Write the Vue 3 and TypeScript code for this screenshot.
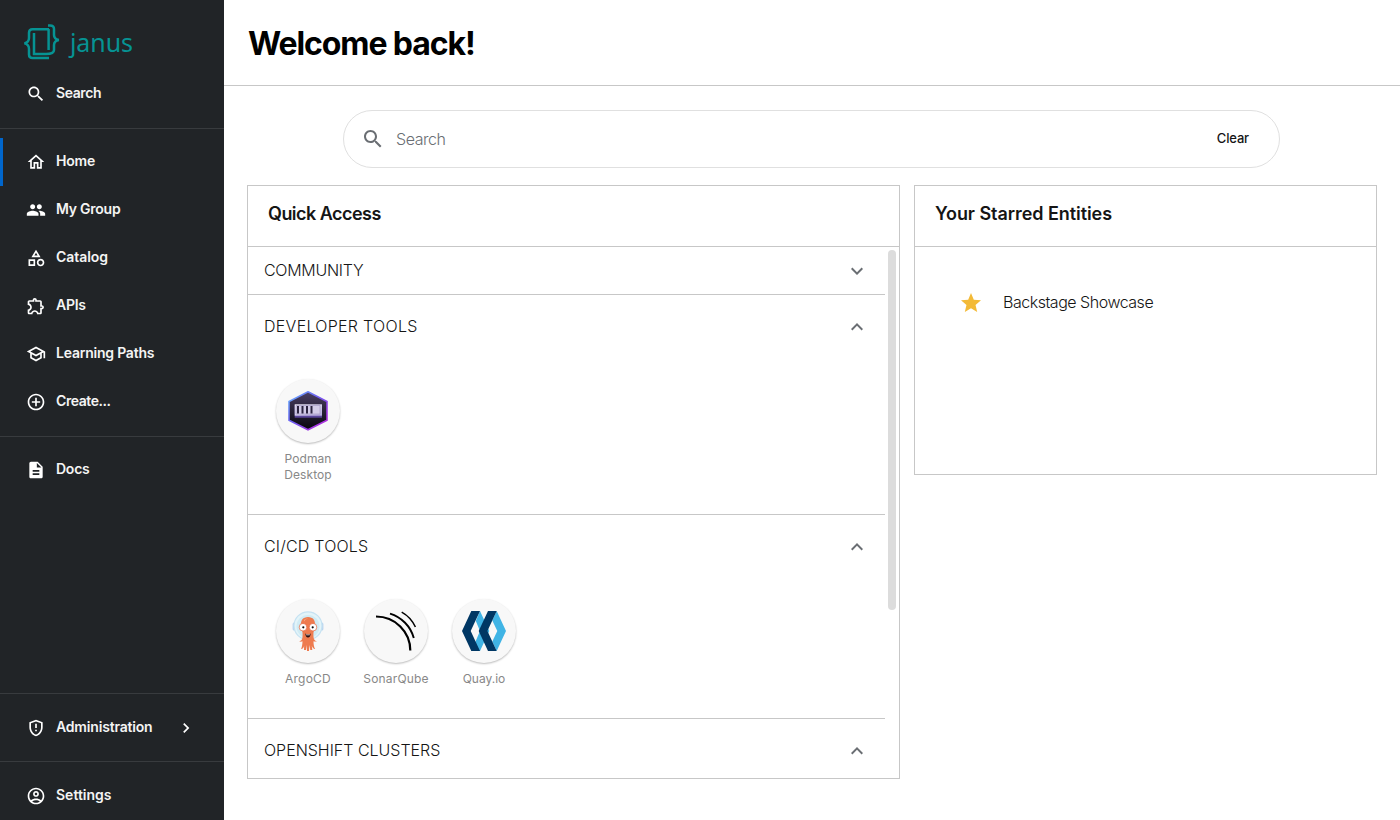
<script setup lang="ts">
interface NavItem {
  label: string
  icon: string
  spacing: number
  active?: boolean
}

interface Tool {
  name: string
  spacing: number
}

interface Section {
  title: string
  spacing: number
  open: boolean
  tools: Tool[]
}

const paths: Record<string, string> = {
  search: 'M15.5 14h-.79l-.28-.27C15.41 12.59 16 11.11 16 9.5 16 5.91 13.09 3 9.5 3S3 5.91 3 9.5 5.91 16 9.5 16c1.61 0 3.09-.59 4.23-1.57l.27.28v.79l5 4.99L20.49 19l-4.99-5zm-6 0C7.01 14 5 11.99 5 9.5S7.01 5 9.5 5 14 7.01 14 9.5 11.99 14 9.5 14z',
  home: 'm12 5.69 5 4.5V18h-2v-6H9v6H7v-7.81l5-4.5M12 3 2 12h3v8h6v-6h2v6h6v-8h3L12 3z',
  group: 'M16 11c1.66 0 2.99-1.34 2.99-3S17.66 5 16 5c-1.66 0-3 1.34-3 3s1.34 3 3 3zm-8 0c1.66 0 2.99-1.34 2.99-3S9.66 5 8 5C6.34 5 5 6.34 5 8s1.34 3 3 3zm0 2c-2.33 0-7 1.17-7 3.5V19h14v-2.5c0-2.33-4.67-3.5-7-3.5zm8 0c-.29 0-.62.02-.97.05 1.16.84 1.97 1.97 1.97 3.45V19h6v-2.5c0-2.33-4.67-3.5-7-3.5z',
  catalog: 'M12 2l-5.5 9h11L12 2zm0 3.84L13.93 9h-3.87L12 5.84zM17.5 13c-2.49 0-4.5 2.01-4.5 4.5s2.01 4.5 4.5 4.5 4.5-2.01 4.5-4.5-2.01-4.5-4.5-4.5zm0 7c-1.38 0-2.5-1.12-2.5-2.5s1.12-2.5 2.5-2.5 2.5 1.12 2.5 2.5-1.12 2.5-2.5 2.5zM3 21.5h8v-8H3v8zm2-6h4v4H5v-4z',
  api: 'M10.5 4.5c.28 0 .5.22.5.5v2h6v6h2c.28 0 .5.22.5.5s-.22.5-.5.5h-2v6h-2.12c-.68-1.75-2.39-3-4.38-3s-3.7 1.25-4.38 3H4v-2.12c1.75-.68 3-2.39 3-4.38 0-1.99-1.24-3.7-2.99-4.38L4 7h6V5c0-.28.22-.5.5-.5m0-2C9.12 2.5 8 3.62 8 5H4c-1.1 0-1.99.9-1.99 2v3.8h.29c1.49 0 2.7 1.21 2.7 2.7s-1.21 2.7-2.7 2.7H2V20c0 1.1.9 2 2 2h3.8v-.3c0-1.49 1.21-2.7 2.7-2.7s2.7 1.21 2.7 2.7v.3H17c1.1 0 2-.9 2-2v-4c1.38 0 2.5-1.12 2.5-2.5S20.38 11 19 11V7c0-1.1-.9-2-2-2h-4c0-1.38-1.12-2.5-2.5-2.5z',
  school: 'M12 3 1 9l4 2.18v6L12 21l7-3.82v-6l2-1.09V17h2V9L12 3zm6.82 6L12 12.72 5.18 9 12 5.28 18.82 9zM17 15.99l-5 2.73-5-2.73v-3.72L12 15l5-2.73v3.72z',
  create: 'M13 7h-2v4H7v2h4v4h2v-4h4v-2h-4V7zm-1-5C6.48 2 2 6.48 2 12s4.48 10 10 10 10-4.48 10-10S17.52 2 12 2zm0 18c-4.41 0-8-3.59-8-8s3.59-8 8-8 8 3.59 8 8-3.59 8-8 8z',
  docs: 'M14 2H6c-1.1 0-1.99.9-1.99 2L4 20c0 1.1.89 2 1.99 2H18c1.1 0 2-.9 2-2V8l-6-6zm2 16H8v-2h8v2zm0-4H8v-2h8v2zm-3-5V3.5L18.5 9H13z',
  shield: 'M12 2 4 5v6.09c0 5.05 3.41 9.76 8 10.91 4.59-1.15 8-5.86 8-10.91V5l-8-3zm6 9.09c0 4-2.55 7.7-6 8.83-3.45-1.13-6-4.82-6-8.83v-4.7l6-2.25 6 2.25v4.7zM11 16h2v-2h-2v2zm0-9h2v5h-2V7z',
  account: 'M12 2C6.48 2 2 6.48 2 12s4.48 10 10 10 10-4.48 10-10S17.52 2 12 2zM7.35 18.5C8.66 17.56 10.26 17 12 17s3.34.56 4.65 1.5C15.34 19.44 13.74 20 12 20s-3.34-.56-4.65-1.5zm10.79-1.38C16.45 15.8 14.32 15 12 15s-4.45.8-6.14 2.12C4.7 15.73 4 13.95 4 12c0-4.42 3.58-8 8-8s8 3.58 8 8c0 1.95-.7 3.73-1.86 5.12zM12 6c-1.93 0-3.5 1.57-3.5 3.5S10.07 13 12 13s3.5-1.57 3.5-3.5S13.93 6 12 6zm0 5c-.83 0-1.5-.67-1.5-1.5S11.17 8 12 8s1.5.67 1.5 1.5S12.83 11 12 11z',
  right: 'M10 6 8.59 7.41 13.17 12l-4.58 4.59L10 18l6-6z',
  down: 'M16.59 8.59 12 13.17 7.41 8.59 6 10l6 6 6-6z',
  up: 'm12 8-6 6 1.41 1.41L12 10.83l4.59 4.58L18 14z',
  star: 'M12 17.27 18.18 21l-1.64-7.03L22 9.24l-7.19-.61L12 2 9.19 8.63 2 9.24l5.46 4.73L5.82 21z',
}

const mainNav: NavItem[] = [
  { label: 'Home', icon: 'home', spacing: -0.2, active: true },
  { label: 'My Group', icon: 'group', spacing: -0.25 },
  { label: 'Catalog', icon: 'catalog', spacing: -0.05 },
  { label: 'APIs', icon: 'api', spacing: -0.25 },
  { label: 'Learning Paths', icon: 'school', spacing: -0.22 },
  { label: 'Create...', icon: 'create', spacing: -0.43 },
]

const sections: Section[] = [
  { title: 'COMMUNITY', spacing: -0.28, open: false, tools: [] },
  { title: 'DEVELOPER TOOLS', spacing: 0.28, open: true, tools: [{ name: 'Podman Desktop', spacing: 0.05 }] },
  {
    title: 'CI/CD TOOLS',
    spacing: 0.2,
    open: true,
    tools: [
      { name: 'ArgoCD', spacing: 0.25 },
      { name: 'SonarQube', spacing: 0.17 },
      { name: 'Quay.io', spacing: 0 },
    ],
  },
  { title: 'OPENSHIFT CLUSTERS', spacing: -0.02, open: true, tools: [] },
]

const track = (spacing: number) => ({ letterSpacing: `${spacing}px` })
</script>

<template>
  <div class="app">
    <aside class="sidebar">
      <div class="logo">
        <svg class="logo-mark" width="36" height="36" viewBox="0 0 36 36" fill="none" stroke="#069393" stroke-width="2.5">
          <path d="M25 5.2H8.500Q5 5.200 5 8.700V14Q5 18.400 0.400 19.400Q5 20.400 5 25V30.500Q5 34 8.500 34H25" />
          <path d="M10 9V30H22Q30 30 30 26V21Q30 17 34.800 16Q30 15 30 11V5Q30 1.500 26 1.500H24" />
          <path d="M24.600 5V26" />
        </svg>
        <span class="logo-text">janus</span>
      </div>

      <div class="nav-item">
        <svg class="ico" viewBox="0 0 24 24"><path :d="paths.search" /></svg>
        <span class="nav-label tight">Search</span>
      </div>
      <hr class="rule">
      <div v-for="item in mainNav" :key="item.label" class="nav-item" :class="{ active: item.active }">
        <svg class="ico" viewBox="0 0 24 24"><path :d="paths[item.icon]" /></svg>
        <span class="nav-label" :style="track(item.spacing)">{{ item.label }}</span>
      </div>
      <hr class="rule">
      <div class="nav-item">
        <svg class="ico" viewBox="0 0 24 24"><path :d="paths.docs" /></svg>
        <span class="nav-label">Docs</span>
      </div>
      <div class="grow" />
      <hr class="rule low">
      <div class="nav-item">
        <svg class="ico" viewBox="0 0 24 24"><path :d="paths.shield" /></svg>
        <span class="nav-label admin">Administration</span>
        <svg class="ico" viewBox="0 0 24 24"><path :d="paths.right" /></svg>
      </div>
      <hr class="rule low">
      <div class="nav-item">
        <svg class="ico" viewBox="0 0 24 24"><path :d="paths.account" /></svg>
        <span class="nav-label loose">Settings</span>
      </div>
    </aside>

    <main class="main">
      <header class="header"><h1>Welcome back!</h1></header>

      <div class="search">
        <svg class="search-ico" viewBox="0 0 24 24"><path :d="paths.search" /></svg>
        <span class="placeholder">Search</span>
        <span class="clear">Clear</span>
      </div>

      <div class="cards">
        <section class="card quick">
          <h2>Quick Access</h2>
          <div class="scroller">
            <div class="sections">
              <div v-for="s in sections" :key="s.title" class="section" :class="{ open: s.open }">
                <div class="section-head">
                  <span class="section-title" :style="track(s.spacing)">{{ s.title }}</span>
                  <svg class="chevron" viewBox="0 0 24 24"><path :d="s.open ? paths.up : paths.down" /></svg>
                </div>
                <div v-if="s.tools.length" class="tools">
                  <div v-for="t in s.tools" :key="t.name" class="tool">
                    <div class="circle">
                      <svg v-if="t.name === 'Podman Desktop'" width="40" height="40" viewBox="0 0 40 40">
                        <defs>
                          <linearGradient id="pd-edge" x1="0" y1="0" x2="1" y2="1">
                            <stop offset="0" stop-color="#68b5ff" /><stop offset=".45" stop-color="#6f5cf0" /><stop offset="1" stop-color="#c222dc" />
                          </linearGradient>
                          <linearGradient id="pd-fill" x1="0" y1="0" x2="0" y2="1">
                            <stop offset="0" stop-color="#4b3f63" /><stop offset="1" stop-color="#07060d" />
                          </linearGradient>
                          <linearGradient id="pd-box" x1="0" y1="0" x2="1" y2="1">
                            <stop offset="0" stop-color="#f4f2fb" /><stop offset="1" stop-color="#b4a9dc" />
                          </linearGradient>
                        </defs>
                        <path d="M20 .8 39 10.500v18.700L20 38.800 1 29.200V10.500z" fill="url(#pd-fill)" stroke="url(#pd-edge)" stroke-width="1.6" />
                        <path d="M6.700 14H34v12.700H6.700z" fill="#5c479d" />
                        <path d="M6.700 13.300H34v11.400H6.700z" fill="url(#pd-box)" />
                        <path d="M8 14.500h24v8.500H8z" fill="#d3cce8" stroke="#9d92bd" stroke-width=".6" />
                        <path d="M10 15v7.500M14.500 15v7.500M19 15v7.500M23.500 15v7.500" stroke="#2c2440" stroke-width="2" />
                      </svg>
                      <svg v-else-if="t.name === 'ArgoCD'" width="40" height="40" viewBox="0 0 40 40">
                        <rect x="4.600" y="11.500" width="3" height="8" rx="1.500" fill="#b9d3ee" />
                        <rect x="32.400" y="11.500" width="3" height="8" rx="1.500" fill="#b9d3ee" />
                        <circle cx="20" cy="14.800" r="14" fill="#e3f4f9" stroke="#c5e2f2" stroke-width="1.200" />
                        <circle cx="20" cy="15.500" r="11.500" fill="#d0ebf4" />
                        <path d="M20 6c-5 0-7.500 3.600-7 8 .4 4 1.700 6 1.600 9 0 4-.2 7-3.600 7.300 2 .7 3 .2 3.500-.1-.1 3-.5 6-1.500 7.800 2 0 2.700-1.500 3.100-3.200L16 39h2l.5-5 .5 6h2l.5-6 .8 5h2l-.5-4.300c.7 1.800 1.500 3.300 3.400 3.300-1.300-1.800-1.700-5-1.700-7.800.7.400 2 .6 3.500.1-3.200-.7-3.600-3.300-3.600-7.300 0-3 1.200-5 1.600-9 .5-4.400-2-8-7-8z" fill="#ee7b4f" />
                        <path d="M16 9q2-2 4-1.500-3 .5-4 3z" fill="#f7b08f" />
                        <circle cx="15" cy="16.200" r="3.800" fill="#fff" stroke="#e5613b" stroke-width=".7" />
                        <circle cx="25" cy="16.200" r="3.800" fill="#fff" stroke="#e5613b" stroke-width=".7" />
                        <circle cx="15.300" cy="16.300" r="1.100" fill="#111" /><circle cx="24.700" cy="16.300" r="1.100" fill="#111" />
                        <path d="M17.300 22.600q2.700 1.800 5.400 0-.3 4-2.700 4t-2.700-4z" fill="#2b0f10" />
                        <path d="M18.300 23.300q1.700.8 3.400 0v.9h-3.400z" fill="#fff" />
                      </svg>
                      <svg v-else-if="t.name === 'SonarQube'" width="40" height="40" viewBox="0 0 40 40" fill="none" stroke="#000">
                        <path d="M0 5.500C19 5.500 34.300 20.600 34.300 39.500" stroke-width="2.200" />
                        <path d="M14 2.600C25.500 6 34.700 15.500 37.800 27" stroke-width="1.900" />
                        <path d="M25.700 1.100C31.500 4.300 36.500 9.700 39.400 16" stroke-width="1.500" />
                      </svg>
                      <svg v-else width="44" height="40" viewBox="0 0 44 40">
                        <path d="M18 0 27.300 20 18 40H9.500L18 20 13.800 10z" fill="#40b4e5" />
                        <path d="M9.300 0H18L8.700 20 18 40H9.300L0 20z" fill="#003764" />
                        <path d="M34.700 0 44 20 34.700 40 30.300 30.500 35.300 20 30.300 9.500z" fill="#40b4e5" />
                        <path d="M26 0h8.700L25.400 20l9.300 20H26L16.700 20z" fill="#003764" />
                      </svg>
                    </div>
                    <span class="tool-label" :style="track(t.spacing)">{{ t.name }}</span>
                  </div>
                </div>
              </div>
            </div>
            <div class="thumb" />
          </div>
        </section>

        <section class="card starred">
          <h2 class="wide">Your Starred Entities</h2>
          <div class="entity">
            <svg class="star" viewBox="0 0 24 24"><path :d="paths.star" /></svg>
            <span class="entity-name">Backstage Showcase</span>
          </div>
        </section>
      </div>
    </main>
  </div>
</template>

<style>
body { margin: 0; background: #fff; }
</style>

<style scoped>
* { box-sizing: border-box; }
.app { display: flex; width: 1400px; height: 820px; overflow: hidden; font-family: Inter, "Noto Sans", sans-serif; color: #151515; }
.sidebar { display: flex; flex-direction: column; width: 224px; height: 820px; flex: none; background: #212427; color: #f4f4f4; }
.logo { display: flex; height: 70px; padding: 24px 0 0 24px; }
.logo-mark { flex: none; }
.logo-text { margin-left: 10px; font: 400 25px/36px "Noto Sans", sans-serif; letter-spacing: -0.1px; color: #069393; }
.nav-item { display: flex; align-items: center; height: 48px; flex: none; padding-left: 26px; border-left: 0 solid #06c; }
.nav-item.active { border-left-width: 3px; padding-left: 23px; }
.ico { width: 20px; height: 20px; fill: #fff; flex: none; }
.nav-label { margin-left: 10px; font-size: 14px; font-weight: 600; line-height: 20px; letter-spacing: -0.25px; padding-bottom: 2px; }
.tight { letter-spacing: -0.4px; }
.loose { letter-spacing: 0; }
.admin { width: 120px; letter-spacing: -0.18px; }
.rule { width: 100%; height: 1px; margin: 10px 0 9px; border: 0; background: #383b3e; flex: none; }
.rule.low { margin: 9px 0 10px; }
.grow { flex: 1; }
.main { flex: 1; min-width: 0; }
.header { height: 86px; padding: 24px 24px 0; border-bottom: 1px solid #c7c7c7; }
h1 { margin: 0; font-size: 32px; line-height: 40px; font-weight: 700; letter-spacing: -1.1px; color: #000; }
.search { display: flex; align-items: center; width: 937px; height: 58px; margin: 24px 0 17px 119px; padding: 0 30px 0 17px; border: 1px solid #e0e0e0; border-radius: 29px; }
.search-ico { width: 24px; height: 24px; fill: #6a6e73; }
.placeholder { flex: 1; margin-left: 11px; font-size: 16px; font-weight: 300; letter-spacing: -0.45px; color: #6a6e73; }
.clear { font-size: 13px; font-weight: 500; letter-spacing: -0.15px; padding-bottom: 2px; }
.cards { display: flex; align-items: flex-start; gap: 14px; padding-left: 23px; }
.card { border: 1px solid #c7c7c7; }
.quick { width: 653px; height: 594px; }
.starred { width: 463px; height: 290px; }
h2 { margin: 0; height: 61px; padding: 16px 20px 0; border-bottom: 1px solid #c7c7c7; font-size: 18px; line-height: 24px; font-weight: 600; letter-spacing: -0.53px; }
h2.wide { letter-spacing: -0.06px; }
.scroller { display: flex; height: 531px; overflow: hidden; }
.sections { width: 637px; flex: none; }
.section { border-bottom: 1px solid #c7c7c7; }
.section-head { display: flex; align-items: center; justify-content: space-between; height: 47px; padding: 0 16px; font-size: 16px; font-weight: 300; }
.section-title { padding-bottom: 2px; }
.open .section-head { height: 64px; }
.chevron { width: 24px; height: 24px; fill: #6a6e73; }
.tools { display: flex; padding: 20px 16px 22px; }
.tool { display: flex; flex-direction: column; align-items: center; width: 88px; }
.circle { display: flex; align-items: center; justify-content: center; width: 64px; height: 64px; border-radius: 50%; background: #f8f8f8; box-shadow: 0 1px 2px rgba(0, 0, 0, .27); }
.tool-label { width: 68px; margin-top: 8px; padding-bottom: 9px; font-size: 12px; line-height: 16px; color: #888; text-align: center; }
.thumb { width: 8px; height: 360px; margin: 3px 0 0 3px; border-radius: 4px; background: #dcdcdc; }
.entity { display: flex; align-items: center; gap: 20px; padding: 44px 0 0 44px; font-size: 16px; font-weight: 300; }
.entity-name { padding-bottom: 2px; letter-spacing: -0.48px; }
.star { width: 24px; height: 24px; fill: #f3ba37; }
</style>
